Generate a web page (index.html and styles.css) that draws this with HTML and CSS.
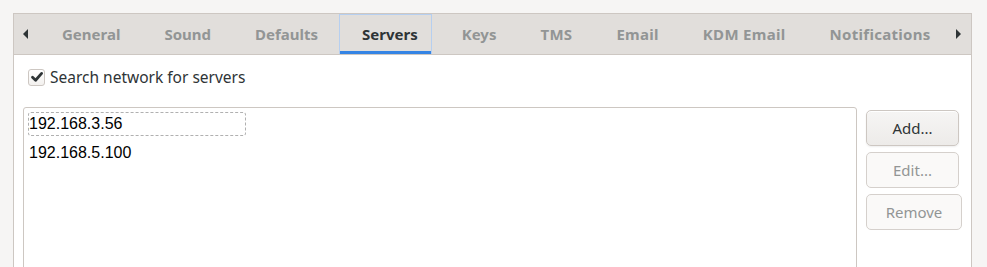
FILE: index.html
```html
<!DOCTYPE html>
<html lang="en">
<head>
    <meta charset="UTF-8">
    <title>Preferences - Servers</title>
    <link rel="stylesheet" href="styles.css">
</head>
<body>

    <div class="notebook">
        <div class="tabbar">
            <span class="arrow arrow-left"></span>
            <div class="tabs">
                <div class="tab">General</div>
                <div class="tab">Sound</div>
                <div class="tab">Defaults</div>
                <div class="tab active">Servers</div>
                <div class="tab">Keys</div>
                <div class="tab">TMS</div>
                <div class="tab">Email</div>
                <div class="tab">KDM Email</div>
                <div class="tab">Notifications</div>
            </div>
            <span class="arrow arrow-right"></span>
        </div>

        <div class="page">
            <label class="check">
                <span class="check-box">
                    <svg width="14" height="14" viewBox="0 0 14 14"><path d="M2.5 7.2 L5.6 10.2 L11.6 3.4" fill="none" stroke="#2e3436" stroke-width="2.8" stroke-linecap="round" stroke-linejoin="round"/></svg>
                </span>
                Search network for servers
            </label>

            <div class="servers">
                <div class="server-list">
                    <div class="row focused">192.168.3.56</div>
                    <div class="row">192.168.5.100</div>
                </div>
                <div class="buttons">
                    <button class="btn">Add...</button>
                    <button class="btn" disabled>Edit...</button>
                    <button class="btn btn-wide" disabled>Remove</button>
                </div>
            </div>
        </div>
    </div>

</body>
</html>
```

FILE: styles.css
```css
body {
    margin: 0;
    padding: 0;
    background-color: #f6f5f4; /* window background */
    font-family: 'Noto Sans', 'Open Sans', sans-serif;
    color: #2e3436;
    overflow: hidden;
}

.notebook {
    margin: 13px 0 0 13px;
    width: 959px;
    box-sizing: border-box;
    border: 1px solid #cdc7c2;
    border-bottom: none;
    background-color: #ffffff;
}

/* tab header */
.tabbar {
    display: flex;
    align-items: center;
    height: 40px;
    background-color: #e1dedb;
    border-bottom: 1px solid #cdc7c2;
    overflow: hidden;
}
.arrow {
    flex-shrink: 0;
    width: 0;
    height: 0;
    border-top: 5px solid transparent;
    border-bottom: 5px solid transparent;
}
.arrow-left {
    border-right: 5px solid #2e3436;
    margin: 0 11px 0 9px;
}
.arrow-right {
    border-left: 5px solid #2e3436;
    margin: 0 10px 0 auto;
}
.tabs {
    display: flex;
    gap: 7px;
    height: 100%;
}
.tab {
    display: flex;
    align-items: center;
    flex-shrink: 0;
    white-space: nowrap;
    padding: 0 13px 1px 22px;
    font-size: 15px;
    font-weight: 700;
    color: #929595;
    box-sizing: border-box;
    height: 100%;
    border: 1px solid transparent;
    border-bottom: none;
}
.tab:nth-child(n+6) {
    letter-spacing: 0.3px;
}
.tab.active {
    color: #2e3436;
    border-color: #b6cff0;
    box-shadow: inset 0 -3px 0 #3584e4;
}

/* page content */
.page {
    padding: 13px 9px 0 9px;
}
.check {
    display: flex;
    align-items: center;
    gap: 5px;
    margin-left: 5px;
    font-size: 15.5px;
    height: 18px;
}
.check-box {
    display: flex;
    align-items: center;
    justify-content: center;
    width: 15px;
    height: 15px;
    border: 1px solid #cdc7c2;
    border-radius: 3px;
    background: linear-gradient(#ffffff, #f3f1ef);
}

.servers {
    display: flex;
    gap: 9px;
    margin-top: 21px;
}
.server-list {
    flex: 1;
    height: 260px;
    border: 1px solid #cdc7c2;
    border-radius: 3px 3px 0 0;
    padding: 4px 4px;
    font-family: 'Liberation Sans', Arial, sans-serif;
    font-size: 16px;
    color: #000000;
}
.row {
    width: 218px;
    height: 24px;
    line-height: 22px;
    box-sizing: border-box;
    border: 1px dashed transparent;
    margin-bottom: 5px;
}
.row.focused {
    border-color: #b0b0b0;
    border-radius: 3px;
}

.buttons {
    display: flex;
    flex-direction: column;
    align-items: flex-start;
    gap: 6px;
    width: 96px;
    padding-top: 3px;
}
.btn {
    width: 93px;
    height: 36px;
    font-family: 'Noto Sans', 'Open Sans', sans-serif;
    font-size: 15px;
    color: #2e3436;
    border: 1px solid #cdc7c2;
    border-radius: 5px;
    background: linear-gradient(#f6f5f4, #edebe9);
    box-shadow: inset 0 1px #ffffff, 0 1px 2px rgba(0, 0, 0, 0.07);
}
.btn:disabled {
    color: #929595;
    background: #faf9f8;
    border-color: #d5d0cc;
    box-shadow: none;
}
.btn-wide {
    width: 96px;
}
```
